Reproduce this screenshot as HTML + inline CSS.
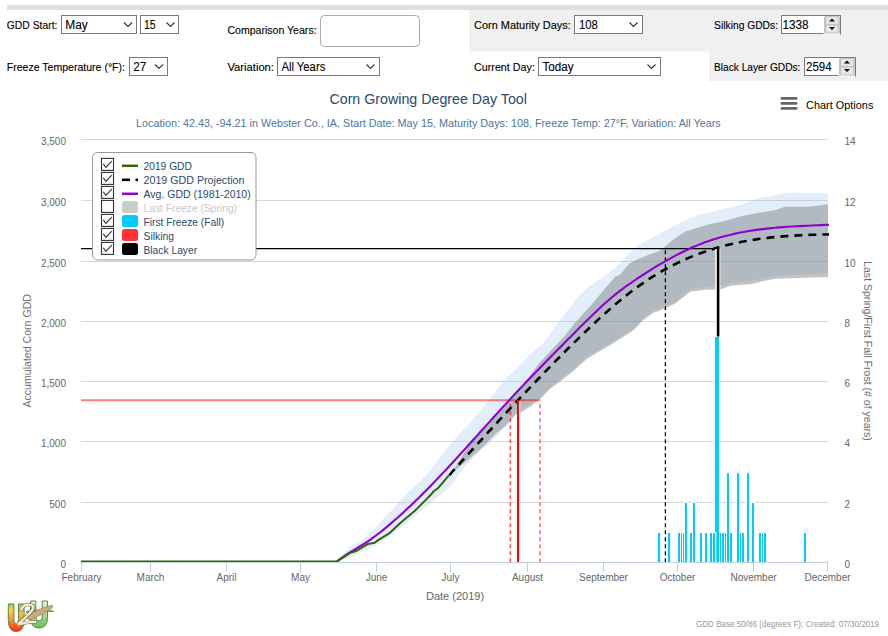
<!DOCTYPE html>
<html><head><meta charset="utf-8"><style>
html,body{margin:0;padding:0;background:#fff;width:888px;height:636px;overflow:hidden}
svg{position:absolute;left:0;top:0}
text{font-family:"Liberation Sans",sans-serif}
.ax{font-size:10px;fill:#666}
.axt{font-size:11px;fill:#707070}
.axt2{font-size:11px;fill:#666}
.lbl{font-size:11.3px;fill:#000;stroke:#000;stroke-width:0.12}
.val{font-size:12px;fill:#000;stroke:#000;stroke-width:0.1}
.lg{font-size:11px;fill:#274b6d}
</style></head><body>
<svg width="888" height="636" viewBox="0 0 888 636">
<rect x="7" y="5" width="881" height="5" fill="#dfdfdf"/>
<rect x="469" y="10" width="419" height="41.5" fill="#f0f0f0"/>
<rect x="709" y="51" width="179" height="30" fill="#f0f0f0"/>
<text x="6.8" y="29.2" class="lbl" textLength="50.6" lengthAdjust="spacingAndGlyphs">GDD Start:</text>
<rect x="61.5" y="15.5" width="75.0" height="18.0" fill="#fff" stroke="#7a7a7a" stroke-width="1"/>
<text x="65.3" y="28.8" class="val" textLength="22.5" lengthAdjust="spacingAndGlyphs">May</text>
<path d="M124.0,22.5 L128.0,26.5 L132.0,22.5" fill="none" stroke="#333" stroke-width="1.1"/>
<rect x="140.5" y="15.5" width="38.0" height="18.0" fill="#fff" stroke="#7a7a7a" stroke-width="1"/>
<text x="144.0" y="28.8" class="val" textLength="11.7" lengthAdjust="spacingAndGlyphs">15</text>
<path d="M166.5,22.5 L170.5,26.5 L174.5,22.5" fill="none" stroke="#333" stroke-width="1.1"/>
<text x="6.8" y="70.8" class="lbl" textLength="118.2" lengthAdjust="spacingAndGlyphs">Freeze Temperature (°F):</text>
<rect x="129.5" y="57.5" width="38.0" height="18.0" fill="#fff" stroke="#7a7a7a" stroke-width="1"/>
<text x="133.3" y="70.8" class="val" textLength="13.1" lengthAdjust="spacingAndGlyphs">27</text>
<path d="M155.0,64.5 L159.0,68.5 L163.0,64.5" fill="none" stroke="#333" stroke-width="1.1"/>
<text x="227.4" y="33.7" class="lbl" textLength="89.2" lengthAdjust="spacingAndGlyphs">Comparison Years:</text>
<rect x="320.5" y="15.5" width="99" height="31" rx="4" fill="#fff" stroke="#aaa" stroke-width="1"/>
<text x="227.4" y="70.9" class="lbl" textLength="46.6" lengthAdjust="spacingAndGlyphs">Variation:</text>
<rect x="277.5" y="57.5" width="102.0" height="18.0" fill="#fff" stroke="#7a7a7a" stroke-width="1"/>
<text x="281.4" y="70.8" class="val" textLength="43.9" lengthAdjust="spacingAndGlyphs">All Years</text>
<path d="M366.5,64.5 L370.5,68.5 L374.5,64.5" fill="none" stroke="#333" stroke-width="1.1"/>
<text x="474.0" y="29.0" class="lbl" textLength="96.8" lengthAdjust="spacingAndGlyphs">Corn Maturity Days:</text>
<rect x="574.5" y="15.5" width="68.0" height="18.0" fill="#fff" stroke="#7a7a7a" stroke-width="1"/>
<text x="578.9" y="28.8" class="val" textLength="18.9" lengthAdjust="spacingAndGlyphs">108</text>
<path d="M629.5,22.5 L633.5,26.5 L637.5,22.5" fill="none" stroke="#333" stroke-width="1.1"/>
<text x="474.0" y="70.7" class="lbl" textLength="60.9" lengthAdjust="spacingAndGlyphs">Current Day:</text>
<rect x="538.5" y="57.5" width="122.0" height="18.0" fill="#fff" stroke="#7a7a7a" stroke-width="1"/>
<text x="542.4" y="70.8" class="val" textLength="31.1" lengthAdjust="spacingAndGlyphs">Today</text>
<path d="M647.5,64.5 L651.5,68.5 L655.5,64.5" fill="none" stroke="#333" stroke-width="1.1"/>
<text x="714.1" y="29.1" class="lbl" textLength="63.9" lengthAdjust="spacingAndGlyphs">Silking GDDs:</text>
<text x="714.0" y="70.8" class="lbl" textLength="86.4" lengthAdjust="spacingAndGlyphs">Black Layer GDDs:</text>
<rect x="781.0" y="15.0" width="60.0" height="19.0" fill="#fff"/>
<path d="M781.5,34.0 L781.5,15.5 L840.5,15.5" fill="none" stroke="#7a7a7a" stroke-width="1"/>
<line x1="781.0" y1="33.5" x2="823.5" y2="33.5" stroke="#7a7a7a" stroke-width="1"/>
<line x1="840.5" y1="15.0" x2="840.5" y2="34.5" stroke="#7a7a7a" stroke-width="1"/>
<text x="782.5" y="28.8" class="val" textLength="26.1" lengthAdjust="spacingAndGlyphs">1338</text>
<rect x="825.0" y="16.5" width="14" height="8.0" fill="#e6e6e6" stroke="#c4c4c4" stroke-width="1"/>
<rect x="825.0" y="25.0" width="14" height="8.0" fill="#e6e6e6" stroke="#c4c4c4" stroke-width="1"/>
<line x1="825.0" y1="17.0" x2="825.0" y2="33.0" stroke="#a8a8a8" stroke-width="1"/>
<line x1="839.0" y1="17.0" x2="839.0" y2="33.0" stroke="#b8b8b8" stroke-width="1"/>
<line x1="825.5" y1="24.5" x2="838.5" y2="24.5" stroke="#c4c4c4" stroke-width="1.2"/>
<path d="M829.0,21.5 L832.0,18.5 L835.0,21.5 Z" fill="#000"/>
<path d="M829.0,27.0 L832.0,30.0 L835.0,27.0 Z" fill="#000"/>
<rect x="804.0" y="57.0" width="52.0" height="19.0" fill="#fff"/>
<path d="M804.5,76.0 L804.5,57.5 L855.5,57.5" fill="none" stroke="#7a7a7a" stroke-width="1"/>
<line x1="804.0" y1="75.5" x2="838.5" y2="75.5" stroke="#7a7a7a" stroke-width="1"/>
<line x1="855.5" y1="57.0" x2="855.5" y2="76.5" stroke="#7a7a7a" stroke-width="1"/>
<text x="806.0" y="70.8" class="val" textLength="25.6" lengthAdjust="spacingAndGlyphs">2594</text>
<rect x="840.0" y="58.5" width="14" height="8.0" fill="#e6e6e6" stroke="#c4c4c4" stroke-width="1"/>
<rect x="840.0" y="67.0" width="14" height="8.0" fill="#e6e6e6" stroke="#c4c4c4" stroke-width="1"/>
<line x1="840.0" y1="59.0" x2="840.0" y2="75.0" stroke="#a8a8a8" stroke-width="1"/>
<line x1="854.0" y1="59.0" x2="854.0" y2="75.0" stroke="#b8b8b8" stroke-width="1"/>
<line x1="840.5" y1="66.5" x2="853.5" y2="66.5" stroke="#c4c4c4" stroke-width="1.2"/>
<path d="M844.0,63.5 L847.0,60.5 L850.0,63.5 Z" fill="#000"/>
<path d="M844.0,69.0 L847.0,72.0 L850.0,69.0 Z" fill="#000"/>
<defs><clipPath id="pc"><rect x="81" y="130" width="747" height="433"/></clipPath></defs>
<g><line x1="81" y1="502.5" x2="828" y2="502.5" stroke="#d8d8d8" stroke-width="1"/>
<line x1="81" y1="441.5" x2="828" y2="441.5" stroke="#d8d8d8" stroke-width="1"/>
<line x1="81" y1="381.5" x2="828" y2="381.5" stroke="#d8d8d8" stroke-width="1"/>
<line x1="81" y1="321.5" x2="828" y2="321.5" stroke="#d8d8d8" stroke-width="1"/>
<line x1="81" y1="261.5" x2="828" y2="261.5" stroke="#d8d8d8" stroke-width="1"/>
<line x1="81" y1="200.5" x2="828" y2="200.5" stroke="#d8d8d8" stroke-width="1"/>
<line x1="81" y1="139.5" x2="828" y2="139.5" stroke="#d8d8d8" stroke-width="1"/>
<g clip-path="url(#pc)"><path d="M336.6,562.0 350.1,546.6 362.7,540.3 374.0,529.0 384.1,517.7 392.9,508.9 400.2,500.8 408.9,491.0 420.2,481.5 431.5,468.9 442.8,453.8 452.9,441.3 461.0,432.0 470.0,422.8 482.6,407.7 495.2,391.4 507.7,376.3 515.3,370.0 530.0,354.0 542.6,344.0 555.2,326.4 567.7,310.0 578.0,297.0 590.0,285.2 602.6,277.7 615.2,267.6 620.0,263.4 629.4,253.0 638.9,244.5 648.3,239.8 657.7,235.1 667.2,229.4 680.0,222.8 697.7,215.1 710.3,212.0 722.9,208.8 740.0,205.0 757.3,198.2 774.6,195.6 785.0,193.0 829.0,193.0 L829.0,273.5 774.6,276.0 750.0,281.1 731.0,283.2 715.7,286.2 705.6,286.7 690.4,289.3 675.2,301.9 660.0,308.0 652.9,310.9 642.8,318.4 634.0,328.0 610.0,343.2 599.2,349.5 586.6,357.1 574.0,368.4 561.4,378.4 550.0,386.9 540.4,396.9 530.4,404.5 515.3,413.3 506.5,423.3 500.0,433.3 491.6,441.0 481.7,449.8 465.2,466.3 452.0,485.0 442.8,492.8 431.5,502.3 410.0,520.2 392.9,534.0 377.8,544.1 355.2,555.4 336.6,562.0 Z" fill="rgba(124,181,236,0.22)"/>
<path d="M449.5,475.2 460.0,459.5 470.0,444.0 488.9,423.0 509.0,400.5 524.1,384.0 537.5,365.3 548.9,352.8 565.2,335.2 575.3,322.6 586.6,310.0 590.0,306.6 602.6,291.5 615.2,276.4 620.0,274.7 629.4,263.4 638.9,258.7 648.3,254.9 659.6,251.1 665.3,246.4 671.9,240.8 680.0,235.1 685.2,231.4 697.7,227.7 710.3,223.9 722.9,221.4 740.0,216.4 757.3,212.9 774.6,210.3 785.0,206.8 809.2,206.8 829.0,204.2 L829.0,276.9 774.6,278.7 750.0,284.2 731.0,285.7 720.8,289.3 715.7,289.8 705.6,289.8 690.4,291.8 675.2,303.4 660.0,310.5 652.9,312.9 642.8,320.4 634.0,330.0 610.0,345.2 599.2,351.5 586.6,359.1 574.0,370.4 561.4,380.4 550.0,388.9 540.4,398.9 530.4,406.5 520.3,412.8 515.3,415.3 506.5,425.3 495.2,434.2 485.0,445.0 476.0,453.0 463.0,464.0 449.5,475.2 Z" fill="rgba(112,112,112,0.42)"/></g>
<line x1="81.5" y1="562" x2="81.5" y2="572" stroke="#c0d0e0" stroke-width="1"/>
<text x="81.5" y="580.8" text-anchor="middle" class="ax">February</text>
<line x1="150.5" y1="562" x2="150.5" y2="572" stroke="#c0d0e0" stroke-width="1"/>
<text x="150.5" y="580.8" text-anchor="middle" class="ax">March</text>
<line x1="226.5" y1="562" x2="226.5" y2="572" stroke="#c0d0e0" stroke-width="1"/>
<text x="226.5" y="580.8" text-anchor="middle" class="ax">April</text>
<line x1="300.5" y1="562" x2="300.5" y2="572" stroke="#c0d0e0" stroke-width="1"/>
<text x="300.5" y="580.8" text-anchor="middle" class="ax">May</text>
<line x1="376.5" y1="562" x2="376.5" y2="572" stroke="#c0d0e0" stroke-width="1"/>
<text x="376.5" y="580.8" text-anchor="middle" class="ax">June</text>
<line x1="450.5" y1="562" x2="450.5" y2="572" stroke="#c0d0e0" stroke-width="1"/>
<text x="450.5" y="580.8" text-anchor="middle" class="ax">July</text>
<line x1="527.5" y1="562" x2="527.5" y2="572" stroke="#c0d0e0" stroke-width="1"/>
<text x="527.5" y="580.8" text-anchor="middle" class="ax">August</text>
<line x1="603.5" y1="562" x2="603.5" y2="572" stroke="#c0d0e0" stroke-width="1"/>
<text x="603.5" y="580.8" text-anchor="middle" class="ax">September</text>
<line x1="677.5" y1="562" x2="677.5" y2="572" stroke="#c0d0e0" stroke-width="1"/>
<text x="677.5" y="580.8" text-anchor="middle" class="ax">October</text>
<line x1="753.5" y1="562" x2="753.5" y2="572" stroke="#c0d0e0" stroke-width="1"/>
<text x="753.5" y="580.8" text-anchor="middle" class="ax">November</text>
<line x1="827.5" y1="562" x2="827.5" y2="572" stroke="#c0d0e0" stroke-width="1"/>
<text x="827.5" y="580.8" text-anchor="middle" class="ax">December</text>
<rect x="656.8" y="532.0" width="4.3" height="30.0" fill="#fff"/>
<rect x="667.0" y="532.0" width="4.1" height="30.0" fill="#fff"/>
<rect x="677.0" y="532.0" width="4.0" height="30.0" fill="#fff"/>
<rect x="680.0" y="532.0" width="3.0" height="30.0" fill="#fff"/>
<rect x="682.0" y="532.0" width="3.0" height="30.0" fill="#fff"/>
<rect x="684.0" y="502.0" width="4.0" height="60.0" fill="#fff"/>
<rect x="689.0" y="532.0" width="4.0" height="30.0" fill="#fff"/>
<rect x="692.0" y="502.0" width="4.0" height="60.0" fill="#fff"/>
<rect x="699.0" y="532.0" width="4.0" height="30.0" fill="#fff"/>
<rect x="704.0" y="532.0" width="4.0" height="30.0" fill="#fff"/>
<rect x="709.0" y="532.0" width="4.0" height="30.0" fill="#fff"/>
<rect x="712.0" y="532.0" width="4.0" height="30.0" fill="#fff"/>
<rect x="719.0" y="532.0" width="3.0" height="30.0" fill="#fff"/>
<rect x="721.0" y="532.0" width="4.0" height="30.0" fill="#fff"/>
<rect x="724.0" y="532.0" width="3.0" height="30.0" fill="#fff"/>
<rect x="726.0" y="472.2" width="4.0" height="89.8" fill="#fff"/>
<rect x="729.0" y="532.0" width="4.0" height="30.0" fill="#fff"/>
<rect x="736.0" y="472.2" width="4.0" height="89.8" fill="#fff"/>
<rect x="739.0" y="532.0" width="3.0" height="30.0" fill="#fff"/>
<rect x="741.0" y="532.0" width="4.0" height="30.0" fill="#fff"/>
<rect x="746.0" y="472.2" width="4.0" height="89.8" fill="#fff"/>
<rect x="751.0" y="502.0" width="4.0" height="60.0" fill="#fff"/>
<rect x="758.0" y="532.0" width="4.0" height="30.0" fill="#fff"/>
<rect x="761.0" y="532.0" width="3.0" height="30.0" fill="#fff"/>
<rect x="763.0" y="532.0" width="4.0" height="30.0" fill="#fff"/>
<rect x="803.0" y="532.0" width="4.0" height="30.0" fill="#fff"/>
<rect x="714" y="336" width="6" height="226" fill="#fff"/>
<rect x="657.8" y="533.0" width="2.3" height="29.0" fill="#00ccff"/>
<rect x="668.0" y="533.0" width="2.1" height="29.0" fill="#00ccff"/>
<rect x="678.0" y="533.0" width="2.0" height="29.0" fill="#00ccff"/>
<rect x="681.0" y="533.0" width="1.0" height="29.0" fill="#00ccff"/>
<rect x="683.0" y="533.0" width="1.0" height="29.0" fill="#00ccff"/>
<rect x="685.0" y="503.0" width="2.0" height="59.0" fill="#00ccff"/>
<rect x="690.0" y="533.0" width="2.0" height="29.0" fill="#00ccff"/>
<rect x="693.0" y="503.0" width="2.0" height="59.0" fill="#00ccff"/>
<rect x="700.0" y="533.0" width="2.0" height="29.0" fill="#00ccff"/>
<rect x="705.0" y="533.0" width="2.0" height="29.0" fill="#00ccff"/>
<rect x="710.0" y="533.0" width="2.0" height="29.0" fill="#00ccff"/>
<rect x="713.0" y="533.0" width="2.0" height="29.0" fill="#00ccff"/>
<rect x="720.0" y="533.0" width="1.0" height="29.0" fill="#00ccff"/>
<rect x="722.0" y="533.0" width="2.0" height="29.0" fill="#00ccff"/>
<rect x="725.0" y="533.0" width="1.0" height="29.0" fill="#00ccff"/>
<rect x="727.0" y="473.2" width="2.0" height="88.8" fill="#00ccff"/>
<rect x="730.0" y="533.0" width="2.0" height="29.0" fill="#00ccff"/>
<rect x="737.0" y="473.2" width="2.0" height="88.8" fill="#00ccff"/>
<rect x="740.0" y="533.0" width="1.0" height="29.0" fill="#00ccff"/>
<rect x="742.0" y="533.0" width="2.0" height="29.0" fill="#00ccff"/>
<rect x="747.0" y="473.2" width="2.0" height="88.8" fill="#00ccff"/>
<rect x="752.0" y="503.0" width="2.0" height="59.0" fill="#00ccff"/>
<rect x="759.0" y="533.0" width="2.0" height="29.0" fill="#00ccff"/>
<rect x="762.0" y="533.0" width="1.0" height="29.0" fill="#00ccff"/>
<rect x="764.0" y="533.0" width="2.0" height="29.0" fill="#00ccff"/>
<rect x="804.0" y="533.0" width="2.0" height="29.0" fill="#00ccff"/>
<rect x="715" y="337" width="4" height="195" fill="#00ccff"/>
<rect x="716.3" y="337" width="2.7" height="225" fill="#00ccff"/>
<line x1="81" y1="400.3" x2="540.5" y2="400.3" stroke="rgba(255,0,0,0.5)" stroke-width="2"/>
<line x1="510.4" y1="404.2" x2="510.4" y2="562" stroke="rgba(255,0,0,0.68)" stroke-width="1.6" stroke-dasharray="4,3"/>
<line x1="540" y1="404.2" x2="540" y2="562" stroke="rgba(255,0,0,0.45)" stroke-width="2" stroke-dasharray="4,3"/>
<line x1="665.4" y1="250.2" x2="665.4" y2="562" stroke="#000" stroke-width="1.3" stroke-dasharray="4,3"/>
<line x1="81" y1="248.7" x2="717.5" y2="248.7" stroke="#000" stroke-width="1.3"/>
<path d="M336.6,562.0 340.7,558.6 344.9,555.7 349.0,553.0 353.2,550.5 357.3,548.0 361.4,545.5 365.6,542.9 369.7,540.1 373.8,537.2 378.0,534.0 382.1,530.8 386.3,527.4 390.4,523.9 394.5,520.3 398.7,516.7 402.8,512.9 406.9,509.1 411.1,505.2 415.2,501.2 419.4,497.2 423.5,493.1 427.6,488.9 431.8,484.7 435.9,480.4 440.0,476.0 444.2,471.6 448.3,467.2 452.5,462.7 456.6,458.2 460.7,453.7 464.9,449.1 469.0,444.5 473.1,440.0 477.3,435.4 481.4,430.7 485.6,426.1 489.7,421.6 493.8,417.0 498.0,412.4 502.1,407.9 506.3,403.4 510.4,398.9 514.5,394.5 518.7,390.0 522.8,385.7 526.9,381.3 531.1,377.0 535.2,372.7 539.4,368.5 543.5,364.2 547.6,360.0 551.8,355.8 555.9,351.6 560.0,347.4 564.2,343.2 568.3,339.1 572.5,334.9 576.6,330.8 580.7,326.6 584.9,322.5 589.0,318.4 593.1,314.4 597.3,310.4 601.4,306.6 605.6,302.8 609.7,299.2 613.8,295.7 618.0,292.4 622.1,289.3 626.2,286.2 630.4,283.3 634.5,280.5 638.7,277.7 642.8,275.0 646.9,272.4 651.1,269.7 655.2,267.2 659.3,264.7 663.5,262.3 667.6,259.9 671.8,257.6 675.9,255.4 680.0,253.2 684.2,251.2 688.3,249.2 692.5,247.3 696.6,245.6 700.7,243.9 704.9,242.3 709.0,240.9 713.1,239.5 717.3,238.2 721.4,237.0 725.6,235.9 729.7,234.9 733.8,233.9 738.0,233.0 742.1,232.2 746.2,231.5 750.4,230.8 754.5,230.1 758.7,229.6 762.8,229.1 766.9,228.6 771.1,228.1 775.2,227.8 779.3,227.4 783.5,227.1 787.6,226.8 791.8,226.5 795.9,226.3 800.0,226.1 804.2,225.9 808.3,225.7 812.4,225.5 816.6,225.3 820.7,225.1 824.9,224.9 829.0,224.8" fill="none" stroke="#9000cc" stroke-width="2.1" stroke-linejoin="round"/>
<path d="M81,561.4 L336.6,561.4 L336.6,561.4 342.6,557.9 350.1,552.9 356.4,551.0 367.7,544.1 374.7,542.8 377.8,540.3 389.1,533.4 397.9,525.2 403.2,520.4 415.2,510.4 424.0,501.6 430.3,495.3 434.0,491.0 437.8,488.4 449.1,475.2" fill="none" stroke="#336600" stroke-width="2" stroke-linejoin="round"/>
<path d="M449.5,475.2 453.3,470.5 457.2,466.3 461.0,462.1 464.8,457.9 468.7,453.6 472.5,449.5 476.3,445.3 480.2,441.1 484.0,436.9 487.8,432.7 491.7,428.5 495.5,424.4 499.3,420.2 503.2,416.1 507.0,412.0 510.8,407.9 514.7,403.8 518.5,399.7 522.3,395.6 526.2,391.6 530.0,387.6 533.8,383.5 537.7,379.5 541.5,375.6 545.3,371.6 549.2,367.7 553.0,363.8 556.8,359.9 560.7,356.0 564.5,352.2 568.3,348.3 572.2,344.6 576.0,340.8 579.8,337.1 583.7,333.4 587.5,329.7 591.3,326.0 595.2,322.5 599.0,318.9 602.8,315.4 606.7,312.0 610.5,308.6 614.3,305.3 618.2,302.1 622.0,298.9 625.8,295.8 629.7,292.8 633.5,289.9 637.3,287.1 641.2,284.4 645.0,281.7 648.8,279.2 652.7,276.7 656.5,274.4 660.3,272.1 664.2,269.9 668.0,267.8 671.8,265.8 675.7,263.9 679.5,262.0 683.3,260.2 687.2,258.5 691.0,256.9 694.8,255.4 698.7,253.9 702.5,252.5 706.3,251.2 710.2,249.9 714.0,248.7 717.8,247.6 721.7,246.5 725.5,245.5 729.3,244.6 733.2,243.7 737.0,242.8 740.8,242.0 744.7,241.3 748.5,240.6 752.3,240.0 756.2,239.4 760.0,238.8 763.8,238.3 767.7,237.9 771.5,237.4 775.3,237.0 779.2,236.7 783.0,236.4 786.8,236.1 790.7,235.8 794.5,235.6 798.3,235.4 802.2,235.2 806.0,235.0 809.8,234.9 813.7,234.8 817.5,234.7 821.3,234.6 825.2,234.5 829.0,234.4" fill="none" stroke="#000" stroke-width="2.6" stroke-dasharray="8,6"/>
<rect x="519" y="401" width="1.2" height="161" fill="#fff"/>
<rect x="515.8" y="421" width="1.2" height="141" fill="#fff"/>
<rect x="517" y="400" width="2.1" height="162.5" fill="#ff0000"/>
<rect x="715.3" y="249" width="5" height="87" fill="#fff"/>
<rect x="716.8" y="248.5" width="2.6" height="88" fill="#000"/>
<line x1="81" y1="562.5" x2="828" y2="562.5" stroke="#c0d0e0" stroke-width="1"/>
<text x="66" y="567.8" text-anchor="end" class="ax">0</text>
<text x="66" y="507.8" text-anchor="end" class="ax">500</text>
<text x="66" y="446.8" text-anchor="end" class="ax">1,000</text>
<text x="66" y="386.8" text-anchor="end" class="ax">1,500</text>
<text x="66" y="326.8" text-anchor="end" class="ax">2,000</text>
<text x="66" y="266.8" text-anchor="end" class="ax">2,500</text>
<text x="66" y="205.8" text-anchor="end" class="ax">3,000</text>
<text x="66" y="144.8" text-anchor="end" class="ax">3,500</text>
<text x="844.5" y="567.8" class="ax">0</text>
<text x="844.5" y="507.8" class="ax">2</text>
<text x="844.5" y="446.8" class="ax">4</text>
<text x="844.5" y="386.8" class="ax">6</text>
<text x="844.5" y="326.8" class="ax">8</text>
<text x="844.5" y="266.8" class="ax">10</text>
<text x="844.5" y="205.8" class="ax">12</text>
<text x="844.5" y="144.8" class="ax">14</text>
<text transform="translate(31,350.8) rotate(-90)" x="-56.75" class="axt" textLength="113.5" lengthAdjust="spacingAndGlyphs">Accumulated Corn GDD</text>
<text transform="translate(864,351) rotate(90)" x="-89.85" class="axt" textLength="179.7" lengthAdjust="spacingAndGlyphs">Last Spring/First Fall Frost (# of years)</text>
<text x="455" y="599.5" text-anchor="middle" class="axt2">Date (2019)</text></g>
<rect x="92.5" y="152.5" width="163.5" height="107.5" rx="5" fill="#fff" stroke="#999" stroke-width="1"/>
<rect x="101.5" y="158.4" width="12" height="12" fill="#fff" stroke="#333" stroke-width="1.1"/>
<path d="M103.3,163.9 L106,167.4 L111.8,161.2" fill="none" stroke="#333" stroke-width="1.1"/>
<line x1="122" y1="165.8" x2="138" y2="165.8" stroke="#336600" stroke-width="2.5"/>
<text x="143.5" y="170.0" class="lg" style="fill:#274b6d" textLength="48.4" lengthAdjust="spacingAndGlyphs">2019 GDD</text>
<rect x="101.5" y="172.4" width="12" height="12" fill="#fff" stroke="#333" stroke-width="1.1"/>
<path d="M103.3,177.9 L106,181.4 L111.8,175.2" fill="none" stroke="#333" stroke-width="1.1"/>
<line x1="122" y1="179.8" x2="130" y2="179.8" stroke="#000" stroke-width="2.5"/>
<line x1="135.5" y1="179.8" x2="138" y2="179.8" stroke="#000" stroke-width="2.5"/>
<text x="143.5" y="184.0" class="lg" style="fill:#274b6d" textLength="100.9" lengthAdjust="spacingAndGlyphs">2019 GDD Projection</text>
<rect x="101.5" y="186.4" width="12" height="12" fill="#fff" stroke="#333" stroke-width="1.1"/>
<path d="M103.3,191.9 L106,195.4 L111.8,189.2" fill="none" stroke="#333" stroke-width="1.1"/>
<line x1="122" y1="193.8" x2="138" y2="193.8" stroke="#9000cc" stroke-width="2.5"/>
<text x="143.5" y="198.0" class="lg" style="fill:#274b6d" textLength="107.2" lengthAdjust="spacingAndGlyphs">Avg. GDD (1981-2010)</text>
<rect x="101.5" y="200.4" width="12" height="12" fill="#fff" stroke="#333" stroke-width="1.1"/>
<rect x="122" y="201.0" width="16" height="12" rx="2.5" fill="#cccccc"/>
<text x="143.5" y="212.0" class="lg" style="fill:#c8c8c8" textLength="93.5" lengthAdjust="spacingAndGlyphs">Last Freeze (Spring)</text>
<rect x="101.5" y="214.4" width="12" height="12" fill="#fff" stroke="#333" stroke-width="1.1"/>
<path d="M103.3,219.9 L106,223.4 L111.8,217.2" fill="none" stroke="#333" stroke-width="1.1"/>
<rect x="122" y="215.0" width="16" height="12" rx="2.5" fill="#00ccff"/>
<text x="143.5" y="226.0" class="lg" style="fill:#274b6d" textLength="80.6" lengthAdjust="spacingAndGlyphs">First Freeze (Fall)</text>
<rect x="101.5" y="228.4" width="12" height="12" fill="#fff" stroke="#333" stroke-width="1.1"/>
<path d="M103.3,233.9 L106,237.4 L111.8,231.2" fill="none" stroke="#333" stroke-width="1.1"/>
<rect x="122" y="229.0" width="16" height="12" rx="2.5" fill="#ff3333"/>
<text x="143.5" y="240.0" class="lg" style="fill:#274b6d" textLength="30.4" lengthAdjust="spacingAndGlyphs">Silking</text>
<rect x="101.5" y="242.4" width="12" height="12" fill="#fff" stroke="#333" stroke-width="1.1"/>
<path d="M103.3,247.9 L106,251.4 L111.8,245.2" fill="none" stroke="#333" stroke-width="1.1"/>
<rect x="122" y="243.0" width="16" height="12" rx="2.5" fill="#000"/>
<text x="143.5" y="254.0" class="lg" style="fill:#274b6d" textLength="53.6" lengthAdjust="spacingAndGlyphs">Black Layer</text>
<text x="428.2" y="104.2" text-anchor="middle" style="font-size:15px;fill:#274b6d" textLength="197.5" lengthAdjust="spacingAndGlyphs">Corn Growing Degree Day Tool</text>
<text x="136.1" y="126.8" style="font-size:11px;fill:#4d759e" textLength="584.6" lengthAdjust="spacingAndGlyphs">Location: 42.43, -94.21 in Webster Co., IA, Start Date: May 15, Maturity Days: 108, Freeze Temp: 27°F, Variation: All Years</text>
<rect x="780.5" y="97" width="17" height="2.8" rx="1.4" fill="#666"/>
<rect x="780.5" y="102" width="17" height="2.8" rx="1.4" fill="#666"/>
<rect x="780.5" y="107" width="17" height="2.8" rx="1.4" fill="#666"/>
<text x="806.1" y="108.8" style="font-size:11px;fill:#000" textLength="67.3" lengthAdjust="spacingAndGlyphs">Chart Options</text>
<text x="696" y="627.3" style="font-size:9px;fill:#999" textLength="183.1" lengthAdjust="spacingAndGlyphs">GDD Base 50/86 (degrees F); Created: 07/30/2019</text>
<g>
<defs><linearGradient id="g1" x1="0" y1="0" x2="0" y2="1"><stop offset="0" stop-color="#8fd04f"/><stop offset="0.22" stop-color="#ffd830"/><stop offset="0.55" stop-color="#ff9a28"/><stop offset="1" stop-color="#ff2a10"/></linearGradient>
<linearGradient id="g2" x1="0" y1="0" x2="0" y2="1"><stop offset="0" stop-color="#e0f4cc"/><stop offset="1" stop-color="#6cc050"/></linearGradient></defs>
<path d="M30.5,601 h5.3 v16 q0,4 3.2,4 q3.2,0 3.2,-4 v-16 h5.3 v16.5 q0,10.5 -8.5,10.5 q-8.5,0 -8.5,-10.5 z" fill="url(#g2)" stroke="#3f7f4f" stroke-width="0.9"/>
<path d="M8.3,604 h5.6 v16 q0,4 2.3,4 q2.3,0 2.3,-4 v-16 h5.6 v16.5 q0,11 -7.9,11 q-7.9,0 -7.9,-11 z" fill="url(#g1)" stroke="#3f7f4f" stroke-width="0.9"/>
<path d="M26,612 q10,-3 27.5,-0.5" fill="none" stroke="#3f8a3a" stroke-width="1.4"/>
<path d="M26.5,618.5 q5,-8 25.5,-13.5 q1.5,1.5 -0.5,3.5 q-10,7 -22,11.5 z" fill="#c9aa7a" stroke="#8f7450" stroke-width="0.5"/>
<path d="M20.8,610 q3,-6 8,-5.5 q5.5,0.8 4.5,4 q-2,4 -15.5,16 q8,-2.5 17.5,-2.8" fill="none" stroke="#6a6040" stroke-width="3.6" stroke-linecap="round"/>
<path d="M20.8,610 q3,-6 8,-5.5 q5.5,0.8 4.5,4 q-2,4 -15.5,16 q8,-2.5 17.5,-2.8" fill="none" stroke="#f6f1cc" stroke-width="2.4" stroke-linecap="round"/>
</g>
</svg>
</body></html>
